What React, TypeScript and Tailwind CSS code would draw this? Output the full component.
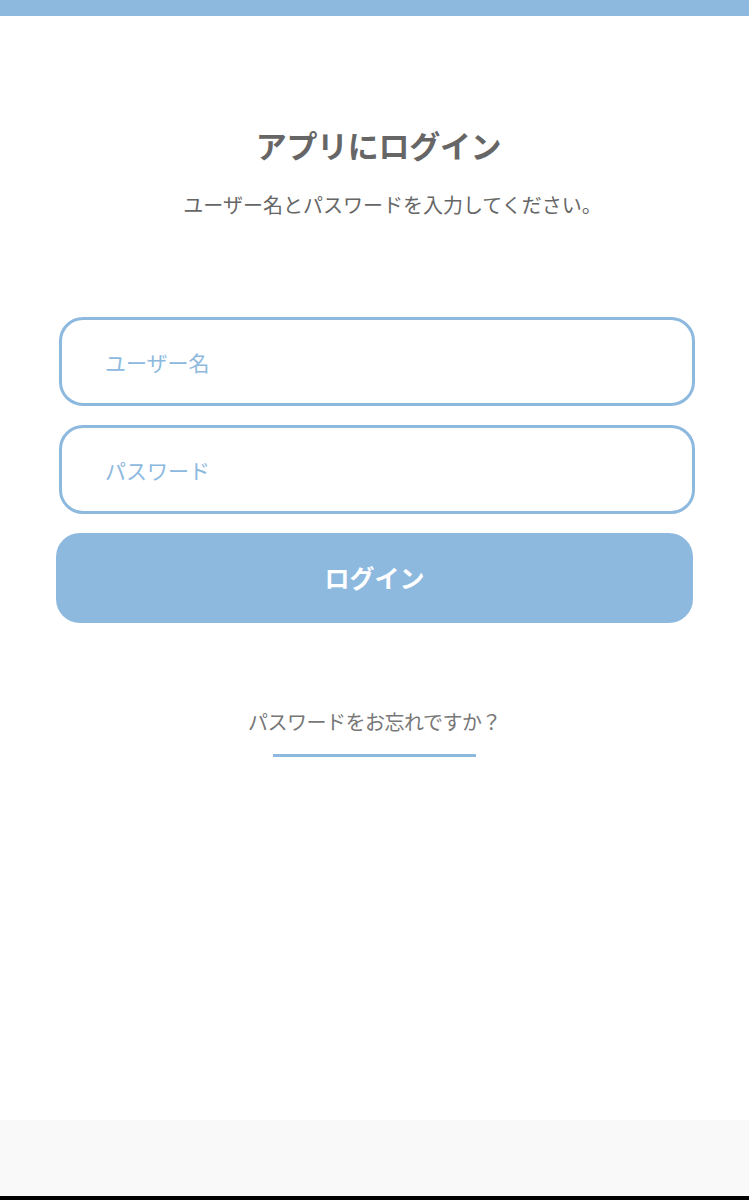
import React from "react";

export default function App() {
  const font = { fontFamily: '"Noto Sans CJK JP", "Noto Sans", sans-serif' };
  return (
    <div className="w-[749px] h-[1200px] bg-white flex flex-col overflow-hidden" style={font}>
      <div className="h-[16px] bg-[#8db9df] shrink-0" />
      <div className="flex-1 flex flex-col items-center">
        <h1 className="mt-[104px] pl-[8px] text-[31px] leading-[50px] font-bold text-[#666666] tracking-[-0.3px]">アプリにログイン</h1>
        <p className="mt-[20px] pl-[36px] text-[20px] leading-[30px] text-[#666666]">ユーザー名とパスワードを入力してください。</p>
        <div className="mt-[97px] w-full flex flex-col gap-[19px]">
          <input
            type="text"
            placeholder="ユーザー名"
            className="ml-[59px] h-[89px] w-[636px] rounded-[24px] border-[3px] border-[#8db9df] bg-white px-[43px] text-[21px] text-[#555] placeholder:text-[#8db9df] outline-none"
          />
          <input
            type="password"
            placeholder="パスワード"
            className="ml-[59px] h-[89px] w-[636px] rounded-[24px] border-[3px] border-[#8db9df] bg-white px-[43px] text-[21px] text-[#555] placeholder:text-[#8db9df] outline-none"
          />
          <button className="ml-[56px] h-[90px] w-[637px] rounded-[24px] bg-[#8db9df] text-white text-[25px] font-bold">
            ログイン
          </button>
        </div>
        <a className="mt-[85px] flex flex-col items-center text-[20px] leading-[28px] text-[#777777] tracking-[-0.5px]">
          <span>パスワードをお忘れですか？</span>
          <span className="mt-[18px] block h-[3px] w-[203px] bg-[#8db9df]" />
        </a>
      </div>
      <div className="h-[76px] bg-[#f9f9f9] shrink-0" />
      <div className="h-[4px] bg-black shrink-0" />
    </div>
  );
}
